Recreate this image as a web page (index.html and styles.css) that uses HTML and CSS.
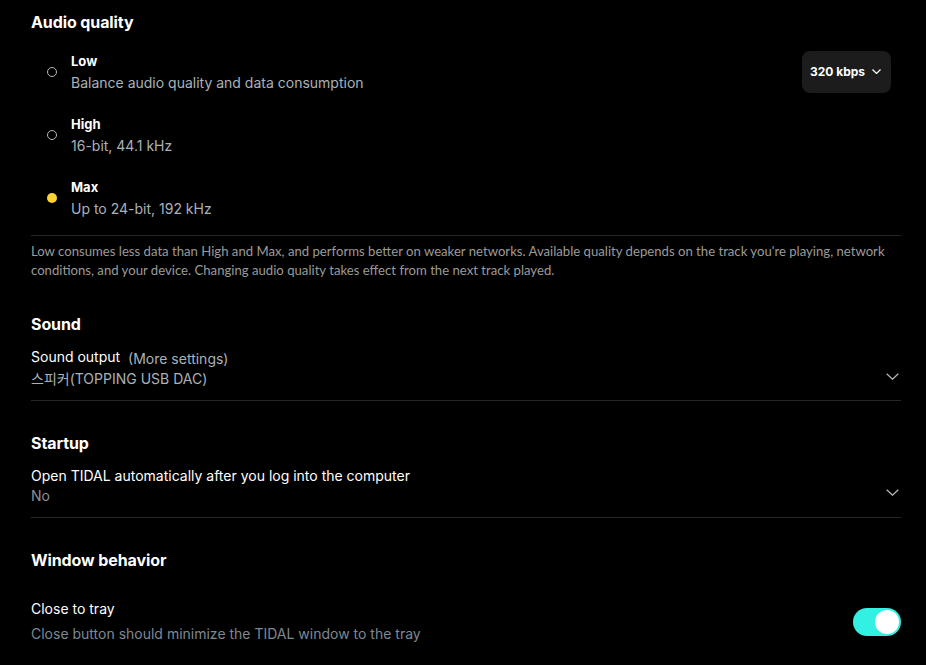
FILE: index.html
```html
<!DOCTYPE html>
<html>
<head>
<meta charset="utf-8">
<link rel="stylesheet" href="styles.css">
</head>
<body>
<main class="page">
  <h2 class="title t-audio">Audio quality</h2>
  <div class="options">
    <div class="option">
      <span class="radio"></span>
      <div class="opt-text">
        <div class="opt-label">Low</div>
        <div class="opt-desc">Balance audio quality and data consumption</div>
      </div>
      <button class="dropdown">320 kbps
        <svg width="9" height="5" viewBox="0 0 9 5"><path d="M0.5 0.5 L4.5 4.5 L8.5 0.5" fill="none" stroke="#fff" stroke-width="1.2"/></svg>
      </button>
    </div>
    <div class="option">
      <span class="radio"></span>
      <div class="opt-text">
        <div class="opt-label">High</div>
        <div class="opt-desc">16-bit, 44.1 kHz</div>
      </div>
    </div>
    <div class="option">
      <span class="radio selected"></span>
      <div class="opt-text">
        <div class="opt-label">Max</div>
        <div class="opt-desc">Up to 24-bit, 192 kHz</div>
      </div>
    </div>
  </div>
  <hr class="divider d1">
  <p class="note">Low consumes less data than High and Max, and performs better on weaker networks. Available quality depends on the track you're playing, network conditions, and your device. Changing audio quality takes effect from the next track played.</p>

  <h2 class="title t-sound">Sound</h2>
  <div class="select-row sound-row">
    <div class="sel-text">
      <div class="sel-label">Sound output <span class="more">(More settings)</span></div>
      <div class="sel-value">스피커(TOPPING USB DAC)</div>
    </div>
    <svg class="chev" width="13" height="7" viewBox="0 0 13 7"><path d="M0.7 0.7 L6.5 6.2 L12.3 0.7" fill="none" stroke="#b4b4b4" stroke-width="1.3"/></svg>
  </div>
  <hr class="divider">

  <h2 class="title t-startup">Startup</h2>
  <div class="select-row startup-row">
    <div class="sel-text">
      <div class="sel-label">Open TIDAL automatically after you log into the computer</div>
      <div class="sel-value no">No</div>
    </div>
    <svg class="chev" width="13" height="7" viewBox="0 0 13 7"><path d="M0.7 0.7 L6.5 6.2 L12.3 0.7" fill="none" stroke="#b4b4b4" stroke-width="1.3"/></svg>
  </div>
  <hr class="divider">

  <h2 class="title t-window">Window behavior</h2>
  <div class="toggle-row">
    <div class="tog-text">
      <div class="tog-label">Close to tray</div>
      <div class="tog-desc">Close button should minimize the TIDAL window to the tray</div>
    </div>
    <span class="toggle"><span class="knob"></span></span>
  </div>
</main>
</body>
</html>
```

FILE: styles.css
```css
html, body {
  margin: 0;
  padding: 0;
  background: #000;
}
body {
  font-family: Inter, "Noto Sans CJK KR", sans-serif;
  color: #fff;
}
.page {
  width: 870px;
  padding: 12px 0 0 31px;
}
.title {
  margin: 0;
  font-size: 16px;
  font-weight: 700;
  line-height: 20px;
  letter-spacing: -0.1px;
}
.options {
  margin-top: 8px;
  display: flex;
  flex-direction: column;
}
.option {
  height: 63px;
  display: flex;
  align-items: center;
}
.radio {
  width: 10px;
  height: 10px;
  box-sizing: border-box;
  border: 1.3px solid #b8b8b8;
  border-radius: 50%;
  margin-left: 16px;
  margin-right: 14px;
  flex: none;
}
.radio.selected {
  border: none;
  background: #ffd432;
}
.opt-text {
  flex: 1;
}
.opt-label {
  font-size: 13px;
  font-weight: 700;
  line-height: 21px;
}
.opt-desc {
  font-size: 14px;
  line-height: 21px;
  color: #a9b2ba;
}
.dropdown {
  display: flex;
  align-items: center;
  gap: 7px;
  height: 42px;
  margin-right: 10px;
  padding: 0 10px 0 8px;
  background: #1c1c1c;
  border: none;
  border-radius: 8px;
  color: #fff;
  font-family: inherit;
  font-size: 12px;
  font-weight: 700;
}
.divider {
  margin: 6px 0 0 0;
  border: none;
  border-top: 1px solid #262626;
  height: 0;
}
.note {
  margin: 6px 0 0 0;
  font-family: Lato, sans-serif;
  font-size: 13.15px;
  line-height: 19px;
  color: #9a9a9a;
}
.t-sound { margin-top: 34px; }
.select-row {
  display: flex;
  align-items: flex-end;
  margin-top: 12px;
}
.sel-text { flex: 1; }
.sel-label {
  font-size: 14px;
  line-height: 22px;
}
.more {
  color: #a9b2ba;
  margin-left: 4px;
  position: relative;
  top: 2px;
}
.sel-value {
  font-size: 14px;
  line-height: 22px;
  color: #a9b2ba;
}
.sel-value.no {
  line-height: 18px;
  color: #8f8f8f;
}
.chev {
  flex: none;
  margin-right: 2px;
  margin-bottom: 10px;
}
.sound-row + .divider { margin-top: 10px; }
.startup-row + .divider { margin-top: 12px; }
.startup-row .chev { margin-bottom: 9px; }
.t-startup { margin-top: 32px; }
.t-window { margin-top: 32px; }
.toggle-row {
  display: flex;
  align-items: center;
  margin-top: 29px;
}
.tog-text { flex: 1; }
.tog-label {
  font-size: 14px;
  line-height: 20px;
}
.tog-desc {
  margin-top: 5px;
  font-size: 14px;
  line-height: 20px;
  color: #7e8894;
}
.toggle {
  width: 48px;
  height: 28px;
  border-radius: 14px;
  background: #33f1e2;
  display: flex;
  align-items: center;
  justify-content: flex-end;
  padding-right: 2px;
  box-sizing: border-box;
  flex: none;
}
.knob {
  width: 24px;
  height: 24px;
  border-radius: 50%;
  background: #fff;
}
```
